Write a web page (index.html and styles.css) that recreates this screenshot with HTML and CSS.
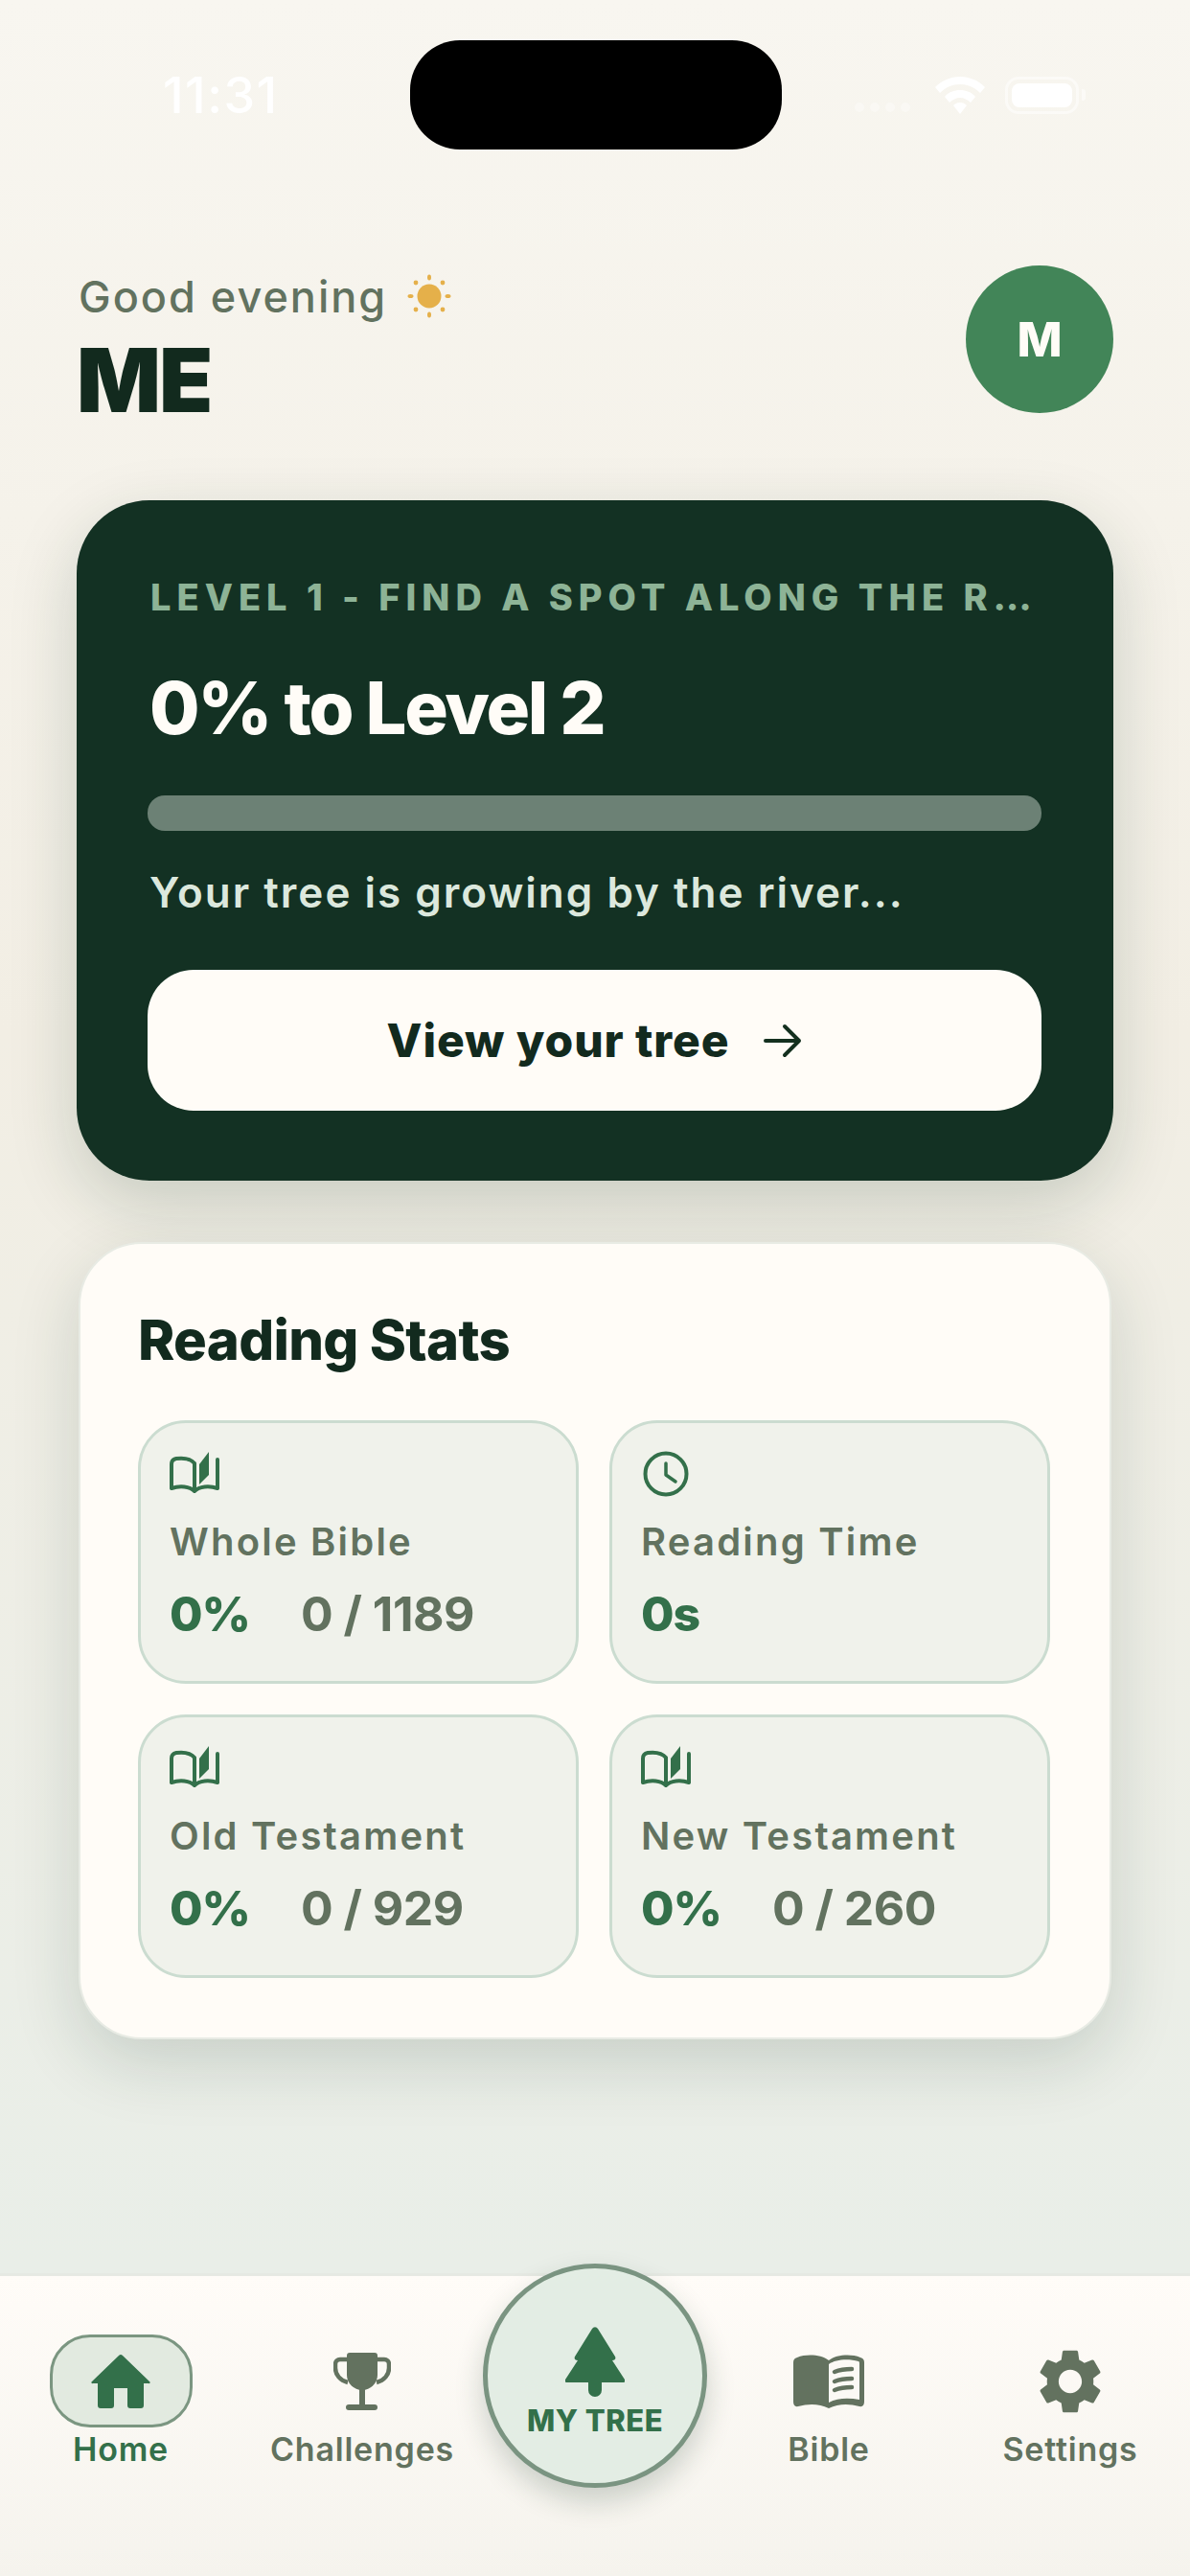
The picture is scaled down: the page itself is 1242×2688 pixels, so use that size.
FILE: index.html
```html
<!DOCTYPE html>
<html lang="en">
<head>
    <meta charset="UTF-8">
    <meta name="viewport" content="width=device-width, initial-scale=1.0">
    <title>My Tree</title>
    <link rel="stylesheet" href="styles.css">
</head>
<body>

    <div class="status">
        <span class="status-time">11:31</span>
        <div class="island"></div>
        <div class="status-icons">
            <div class="signal"><i></i><i></i><i></i><i></i></div>
            <svg class="wifi" width="52" height="39" viewBox="0 0 52 39">
                <path d="M26 0C16 0 7 4 0 11l5 6C11 11 18 8 26 8s15 3 21 9l5-6C45 4 36 0 26 0z" fill="#fff"/>
                <path d="M26 14c-6 0-12 2-16 7l5 6c3-3 7-5 11-5s8 2 11 5l5-6c-4-5-10-7-16-7z" fill="#fff"/>
                <path d="M26 27c-3 0-5 1-7 3l7 9 7-9c-2-2-4-3-7-3z" fill="#fff"/>
            </svg>
            <div class="battery"><div class="battery-fill"></div></div>
            <div class="battery-cap"></div>
        </div>
    </div>

    <main class="page">
        <header class="header">
            <div>
                <div class="greeting">
                    <span>Good evening</span>
                    <svg width="46" height="46" viewBox="0 0 46 46" fill="#e5b04a">
                        <circle cx="23" cy="23" r="12.5"/>
                        <ellipse cx="23" cy="3.5" rx="2" ry="3"/>
                        <ellipse cx="23" cy="42.5" rx="2" ry="3"/>
                        <ellipse cx="3.5" cy="23" rx="3" ry="2"/>
                        <ellipse cx="42.5" cy="23" rx="3" ry="2"/>
                        <circle cx="9" cy="9" r="2.4"/>
                        <circle cx="37" cy="9" r="2.4"/>
                        <circle cx="9" cy="37" r="2.4"/>
                        <circle cx="37" cy="37" r="2.4"/>
                    </svg>
                </div>
                <h1 class="name">ME</h1>
            </div>
            <div class="avatar">M</div>
        </header>

        <section class="hero">
            <p class="hero-level">LEVEL 1 - FIND A SPOT ALONG THE R…</p>
            <h2 class="hero-title">0% to Level 2</h2>
            <div class="track"></div>
            <p class="hero-text">Your tree is growing by the river...</p>
            <button class="hero-btn">
                <span>View your tree</span>
                <svg width="40" height="36" viewBox="0 0 40 36" fill="none" stroke="#14301f" stroke-width="4" stroke-linecap="round" stroke-linejoin="round">
                    <path d="M2 18h35M22 3l15 15-15 15"/>
                </svg>
            </button>
        </section>

        <section class="stats">
            <h2 class="stats-title">Reading Stats</h2>
            <div class="stats-grid">
                <div class="tile">
                    <svg class="tile-icon" width="52" height="48" viewBox="0 0 52 48">
                        <use href="#smallbook"/>
                    </svg>
                    <div class="tile-label">Whole Bible</div>
                    <div class="tile-value"><b>0%</b><span>0 / 1189</span></div>
                </div>
                <div class="tile">
                    <svg class="tile-icon" width="52" height="48" viewBox="0 0 52 48" fill="none" stroke="#33704a" stroke-linecap="round">
                        <circle cx="26" cy="24" r="21.5" stroke-width="4"/>
                        <path d="M26 13v12l10 7" stroke-width="3.5" stroke-linejoin="round"/>
                    </svg>
                    <div class="tile-label">Reading Time</div>
                    <div class="tile-value"><b>0s</b></div>
                </div>
                <div class="tile">
                    <svg class="tile-icon" width="52" height="48" viewBox="0 0 52 48">
                        <use href="#smallbook"/>
                    </svg>
                    <div class="tile-label">Old Testament</div>
                    <div class="tile-value"><b>0%</b><span>0 / 929</span></div>
                </div>
                <div class="tile">
                    <svg class="tile-icon" width="52" height="48" viewBox="0 0 52 48">
                        <use href="#smallbook"/>
                    </svg>
                    <div class="tile-label">New Testament</div>
                    <div class="tile-value"><b>0%</b><span>0 / 260</span></div>
                </div>
            </div>
        </section>
    </main>

    <nav class="tabbar">
        <div class="tab tab-active">
            <div class="tab-icon">
                <svg width="62" height="56" viewBox="0 0 62 56" fill="#33704a">
                    <path d="M29 1a3 3 0 0 1 4 0l28 27a1 1 0 0 1-1 2h-5v23a3 3 0 0 1-3 3H41a3 3 0 0 1-3-3V35H24v18a3 3 0 0 1-3 3H10a3 3 0 0 1-3-3V30H2a1 1 0 0 1-1-2z"/>
                </svg>
            </div>
            <span class="tab-label">Home</span>
        </div>
        <div class="tab">
            <div class="tab-icon">
                <svg width="60" height="60" viewBox="0 0 60 60" fill="#63725f">
                    <path d="M17 0h26a3 3 0 0 1 3 3v20a16 16 0 0 1-32 0V3a3 3 0 0 1 3-3z"/>
                    <rect x="27" y="36" width="6" height="20"/>
                    <rect x="13" y="54" width="33" height="6" rx="3"/>
                    <path d="M15 7H7a5 5 0 0 0-5 5v4c0 7 5 13 13 15M45 7h8a5 5 0 0 1 5 5v4c0 7-5 13-13 15" fill="none" stroke="#63725f" stroke-width="4.5"/>
                </svg>
            </div>
            <span class="tab-label">Challenges</span>
        </div>
        <div class="tab tab-center">
            <div class="tree-btn">
                <svg width="62" height="73" viewBox="0 0 62 73" fill="#33704a">
                    <path d="M28 2a3.500 3.500 0 0 1 6 0l18 29c1 2 0 4-3 4l13 20c1 2 0 3-2 3H38v8a7 7 0 0 1-14 0v-8H2c-2 0-3-1-2-3l13-20c-3 0-4-2-3-4z"/>
                </svg>
                <span class="tree-label">MY TREE</span>
            </div>
        </div>
        <div class="tab">
            <div class="tab-icon">
                <svg width="74" height="56" viewBox="0 0 74 56">
                    <path d="M4 3c10-4 25-3 33 3 8-6 23-7 33-3q4 1 4 5v41q0 6-5 5c-11-3-22-3-32 2-10-5-21-5-32-2q-5 1-5-5V8q0-4 4-5z" fill="#63725f"/>
                    <path d="M37 10c7-5 20-6 31-3q1 0 1 2v38c-11-2-23-2-32 3z" fill="#fbf9f5"/>
                    <path d="M43 18c5-2 11-3 18-3M43 28c5-2 11-3 18-3M43 37c5-2 11-3 18-3" fill="none" stroke="#63725f" stroke-width="4.500" stroke-linecap="round"/>
                </svg>
            </div>
            <span class="tab-label">Bible</span>
        </div>
        <div class="tab">
            <div class="tab-icon">
                <svg width="64" height="68" viewBox="2.500 2 19 20" fill="#63725f">
                    <path d="M19.14 12.94c.04-.3.06-.61.06-.94 0-.32-.02-.64-.07-.94l2.03-1.58c.18-.14.23-.41.12-.61l-1.92-3.32c-.12-.22-.37-.29-.59-.22l-2.39.96c-.5-.38-1.03-.7-1.62-.94l-.36-2.54c-.04-.24-.24-.41-.48-.41h-3.84c-.24 0-.43.17-.47.41l-.36 2.54c-.59.24-1.13.57-1.62.94l-2.39-.96c-.22-.08-.47 0-.59.22L2.74 8.87c-.12.21-.08.47.12.61l2.03 1.58c-.05.3-.09.63-.09.94s.02.64.07.94l-2.03 1.58c-.18.14-.23.41-.12.61l1.92 3.32c.12.22.37.29.59.22l2.39-.96c.5.38 1.03.7 1.62.94l.36 2.54c.05.24.24.41.48.41h3.84c.24 0 .44-.17.47-.41l.36-2.54c.59-.24 1.13-.56 1.62-.94l2.39.96c.22.08.47 0 .59-.22l1.92-3.32c.12-.22.07-.47-.12-.61l-2.01-1.58zM12 15.600c-1.98 0-3.600-1.620-3.600-3.600s1.620-3.600 3.600-3.600 3.600 1.620 3.600 3.600-1.620 3.600-3.600 3.600z"/>
                </svg>
            </div>
            <span class="tab-label">Settings</span>
        </div>
    </nav>

    <!-- shared book icon for the stat tiles -->
    <svg class="defs" width="0" height="0">
        <symbol id="smallbook" viewBox="0 0 52 48">
            <path d="M2 39V14q0-5 5-6c8-1 15 0 19 5v29c-5-5-15-6-24-3zM50 39V9M50 39c-9-3-19-2-24 3" fill="none" stroke="#33704a" stroke-width="4" stroke-linejoin="round" stroke-linecap="round"/>
            <path d="M31 35V14L41 1v24z" fill="#33704a"/>
        </symbol>
    </svg>

</body>
</html>
```

FILE: styles.css
```css
* {
    margin: 0;
    padding: 0;
    box-sizing: border-box;
}

body {
    width: 1242px;
    height: 2688px;
    display: flex;
    flex-direction: column;
    overflow: hidden;
    font-family: 'Inter', 'Open Sans', sans-serif;
    background: linear-gradient(180deg, #f8f6f0 0%, #f2eee4 40%, #e9eee8 88%, #e9eee8 100%);
    color: #122a1e;
}

.defs {
    position: absolute;
}

/* status bar */
.status {
    display: flex;
    align-items: center;
    padding: 42px 109px 0 170px;
}

.status-time {
    width: 258px;
    font-size: 52px;
    font-weight: 500;
    letter-spacing: 1.5px;
    color: #fff;
}

.island {
    width: 388px;
    height: 114px;
    background: #000;
    border-radius: 52px;
}

.status-icons {
    display: flex;
    align-items: center;
    margin-left: auto;
}

.signal {
    display: flex;
    gap: 6px;
    margin-top: 26px;
    margin-right: 26px;
}

.signal i {
    width: 10px;
    height: 10px;
    border-radius: 50%;
    background: rgba(255, 255, 255, 0.35);
}

.wifi {
    margin-right: 21px;
}

.battery {
    width: 77px;
    height: 39px;
    padding: 4px;
    border: 3px solid rgba(255, 255, 255, 0.5);
    border-radius: 14px;
}

.battery-fill {
    height: 100%;
    background: #fff;
    border-radius: 8px;
}

.battery-cap {
    width: 4px;
    height: 12px;
    margin-left: 3px;
    background: rgba(255, 255, 255, 0.5);
    border-radius: 0 3px 3px 0;
}

/* page */
.page {
    flex: 1;
    padding: 121px 80px 0;
}

.header {
    height: 154px;
    display: flex;
    justify-content: space-between;
    align-items: flex-start;
}

.greeting {
    display: flex;
    align-items: center;
    gap: 21px;
    height: 46px;
    margin-top: 9px;
    margin-left: 2px;
    font-size: 45px;
    font-weight: 500;
    letter-spacing: 2px;
    color: #62725f;
}

.name {
    margin-top: 17px;
    font-size: 92px;
    line-height: 96px;
    font-weight: 900;
    letter-spacing: -2px;
    color: #122a1e;
}

.avatar {
    width: 154px;
    height: 154px;
    display: flex;
    align-items: center;
    justify-content: center;
    border-radius: 50%;
    background: #428558;
    color: #fffcf7;
    font-size: 50px;
    font-weight: 800;
}

.hero {
    height: 710px;
    margin-top: 91px;
    padding: 78px 75px 0 74px;
    border-radius: 76px;
    background: #133123;
    box-shadow: 0 24px 70px rgba(19, 49, 35, 0.18);
}

.hero-level {
    height: 46px;
    padding-left: 3px;
    white-space: nowrap;
    font-size: 38px;
    line-height: 46px;
    font-weight: 800;
    letter-spacing: 6px;
    color: #8db396;
}

.hero-title {
    margin-top: 47px;
    padding-left: 2px;
    font-size: 76px;
    line-height: 90px;
    font-weight: 800;
    letter-spacing: -2.3px;
    color: #fffcf7;
}

.track {
    height: 37px;
    margin-top: 47px;
    border-radius: 18px;
    background: #6c8175;
}

.hero-text {
    margin-top: 36px;
    padding-left: 2px;
    font-size: 44px;
    line-height: 56px;
    font-weight: 600;
    letter-spacing: 2px;
    color: #dce8dd;
}

.hero-btn {
    width: 100%;
    height: 147px;
    margin-top: 53px;
    display: flex;
    align-items: center;
    justify-content: center;
    gap: 36px;
    border: none;
    border-radius: 48px;
    background: #fffcf7;
    font-family: inherit;
    font-size: 48px;
    font-weight: 800;
    letter-spacing: 0.9px;
    color: #122a1e;
}

.stats {
    height: 832px;
    margin: 64px 2px 0;
    padding: 67px 60px 0;
    border: 2px solid #e8ebe4;
    border-radius: 66px;
    background: #fffcf7;
    box-shadow: 0 24px 70px rgba(19, 49, 35, 0.16);
}

.stats-title {
    font-size: 58px;
    line-height: 66px;
    font-weight: 800;
    letter-spacing: -0.7px;
    color: #122a1e;
}

.stats-grid {
    display: grid;
    grid-template-columns: 460px 460px;
    grid-auto-rows: 275px;
    gap: 32px;
    margin-top: 51px;
}

.tile {
    padding: 29px 30px 0;
    border: 3px solid #cbdcd0;
    border-radius: 50px;
    background: #f0f2eb;
}

.tile-icon {
    display: block;
}

.tile-label {
    margin-top: 23px;
    font-size: 40px;
    line-height: 48px;
    font-weight: 600;
    letter-spacing: 2.2px;
    color: #62725f;
}

.tile-value {
    display: flex;
    gap: 53px;
    margin-top: 21px;
    font-size: 50px;
    line-height: 60px;
}

.tile-value b {
    font-weight: 800;
    letter-spacing: -1px;
    color: #33704a;
}

.tile-value span {
    font-weight: 700;
    letter-spacing: -0.5px;
    color: #62725f;
}

/* bottom tabs */
.tabbar {
    height: 316px;
    flex-shrink: 0;
    display: flex;
    padding-top: 61px;
    border-top: 3px solid #e6e9e3;
    background: linear-gradient(180deg, #fffcf8 0%, #f5f3ed 100%);
}

.tab {
    width: 252px;
    display: flex;
    flex-direction: column;
    align-items: center;
}

.tab-center {
    width: 234px;
}

.tab:nth-child(4) {
    width: 254px;
}

.tab:nth-child(5) {
    width: 250px;
}

.tab-icon {
    width: 149px;
    height: 97px;
    display: flex;
    align-items: center;
    justify-content: center;
    border: 3px solid transparent;
    border-radius: 42px;
}

.tab-active .tab-icon {
    border-color: #7b9681;
    background: #e2eae0;
}

.tab-label {
    margin-top: 3px;
    font-size: 34px;
    line-height: 40px;
    font-weight: 600;
    letter-spacing: 0.8px;
    color: #62725f;
}

.tab-active .tab-label {
    color: #33704a;
}

.tree-btn {
    width: 234px;
    height: 234px;
    margin-top: -74px;
    padding-top: 61px;
    display: flex;
    flex-direction: column;
    align-items: center;
    flex-shrink: 0;
    border: 5px solid #7a9481;
    border-radius: 50%;
    background: #e3ede4;
    box-shadow: 0 14px 30px rgba(19, 49, 35, 0.2);
}

.tree-label {
    margin-top: 8px;
    font-size: 31px;
    line-height: 34px;
    font-weight: 800;
    letter-spacing: 0.5px;
    color: #33704a;
}
```
